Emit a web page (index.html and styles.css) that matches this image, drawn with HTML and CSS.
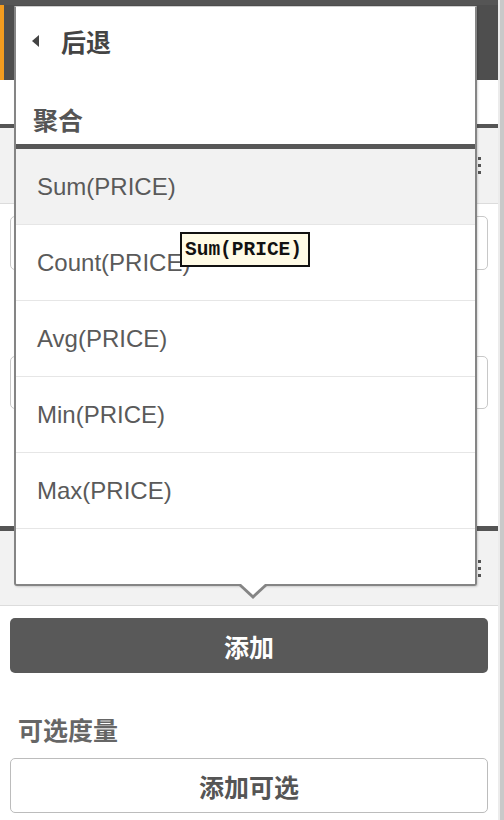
FILE: index.html
```html
<!DOCTYPE html>
<html lang="zh-CN">
<head>
<meta charset="utf-8">
<link rel="stylesheet" href="styles.css">
</head>
<body>
<div class="screen">
  <div class="page">
    <div class="topline"></div>
    <div class="toolbar"></div>
    <div class="blank"></div>
    <section class="section">
      <div class="sec-head"><span class="dots"><i></i><i></i><i></i></span></div>
      <div class="sec-body">
        <div class="field"></div>
        <div class="field field-2"></div>
      </div>
    </section>
    <section class="section section-2">
      <div class="sec-head sec-head-2"><span class="dots"><i></i><i></i><i></i></span></div>
      <div class="sec-body sec-body-2">
        <button class="btn btn-dark">添加</button>
        <div class="label">可选度量</div>
        <button class="btn btn-light">添加可选</button>
      </div>
    </section>

    <div class="popup">
      <div class="pop-back"><span class="tri"></span><span>后退</span></div>
      <div class="pop-title">聚合</div>
      <ul class="pop-list">
        <li class="hover">Sum(PRICE)</li>
        <li>Count(PRICE)</li>
        <li>Avg(PRICE)</li>
        <li>Min(PRICE)</li>
        <li>Max(PRICE)</li>
      </ul>
    </div>
    <div class="tooltip">Sum(PRICE)</div>
  </div>
  <div class="scrollbar"></div>
</div>
</body>
</html>
```
FILE: styles.css
```css
* { box-sizing: border-box; margin: 0; padding: 0; }
html, body { width: 504px; height: 820px; overflow: hidden; background: #fff; }
body { font-family: "Liberation Sans", "Noto Sans CJK SC", sans-serif; }

.screen { display: flex; width: 504px; height: 820px; }
.page { position: relative; width: 498px; height: 820px; display: flex; flex-direction: column; background: #fff; }
.scrollbar { width: 6px; height: 820px; background: #c9c9c9; border-left: 2px solid #ececec; }

.topline { height: 5px; background: #555; }
.toolbar { height: 75px; background: #4e4e4e; border-left: 4px solid #f39c1f; }
.blank { height: 44px; background: #fff; }

.section { border-top: 4px solid #555; display: flex; flex-direction: column; }
.section-2 { border-top-width: 5px; }
.sec-head { height: 76px; background: #f2f2f2; border-bottom: 1px solid #dcdcdc; display: flex; align-items: center; justify-content: flex-end; padding-right: 17px; }
.sec-head-2 { height: 75px; }
.dots { display: flex; flex-direction: column; gap: 4px; }
.dots i { display: block; width: 3px; height: 3px; background: #555; }

.sec-body { height: 322px; padding: 12px 10px 0; display: flex; flex-direction: column; }
.sec-body-2 { height: auto; }
.field { height: 54px; border: 1px solid #c8c8c8; border-radius: 5px; }
.field-2 { margin-top: 86px; height: 53px; }

.btn { display: flex; align-items: center; justify-content: center; width: 478px; height: 55px; border-radius: 5px; font-family: "Noto Sans CJK SC", sans-serif; font-weight: 700; font-size: 25px; }
.btn-dark { background: #595959; color: #fff; border: none; }
.btn-light { background: #fff; color: #555; border: 1px solid #bcbcbc; }
.label { height: 85px; display: flex; align-items: center; padding: 26px 0 0 8px; font-family: "Noto Sans CJK SC", sans-serif; font-weight: 700; font-size: 25px; color: #666; }

.popup { position: absolute; left: 14px; top: 6px; width: 463px; height: 580px; background: #fff; border: 2px solid #858585; border-top: 1px solid #cfcfcf; border-radius: 0 0 3px 3px; box-shadow: 1px 1px 2px rgba(0,0,0,0.15); display: flex; flex-direction: column; }
.popup::before { content: ""; position: absolute; left: 222px; bottom: -15px; border-left: 15px solid transparent; border-right: 15px solid transparent; border-top: 14px solid #858585; }
.popup::after { content: ""; position: absolute; left: 225px; bottom: -11px; border-left: 12px solid transparent; border-right: 12px solid transparent; border-top: 11px solid #fff; }

.pop-back { height: 73px; display: flex; align-items: center; gap: 22px; padding: 0 0 5px 16px; font-family: "Noto Sans CJK SC", sans-serif; font-weight: 700; font-size: 25px; color: #444; }
.tri { width: 0; height: 0; border-top: 6px solid transparent; border-bottom: 6px solid transparent; border-right: 7px solid #444; }
.pop-title { height: 69px; display: flex; align-items: flex-end; padding: 0 0 10px 17px; font-family: "Noto Sans CJK SC", sans-serif; font-weight: 700; font-size: 25px; line-height: 30px; color: #555; border-bottom: 5px solid #575757; }

.pop-list { list-style: none; }
.pop-list li { height: 76px; display: flex; align-items: center; padding-left: 21px; border-bottom: 1px solid #e6e6e6; font-size: 24px; color: #5a5a5a; }
.pop-list li.hover { background: #f2f2f2; }

.tooltip { position: absolute; left: 180px; top: 232px; width: 130px; height: 35px; background: #fffbe6; border: 2px solid #111; display: flex; align-items: center; padding-left: 3px; font-family: "Liberation Mono", monospace; font-weight: 700; font-size: 19.5px; color: #111; }
```
